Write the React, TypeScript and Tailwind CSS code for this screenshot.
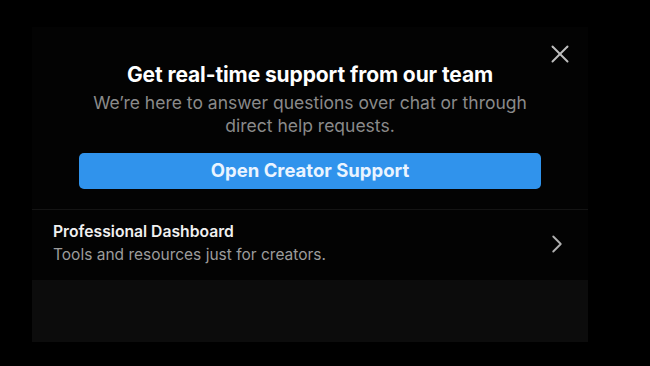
import React from "react";
import {X, ChevronRight} from "lucide-react";

export default function App() {
    return (
        <div className="w-[650px] h-[366px] bg-black pt-[27px] pl-[32px]" style={{fontFamily: "Inter, 'Noto Sans', sans-serif"}}>
            <div className="w-[556px] flex flex-col bg-[#030303]">
                <div className="relative h-[182px] flex flex-col items-center pt-[36px]">
                    <button className="absolute right-[13px] top-[12px] text-[#bdbdbd]">
                        <X size={30} strokeWidth={1.6} />
                    </button>
                    <h2 className="text-[21px] leading-[24px] font-bold text-white tracking-[-0.1px]">
                        Get real-time support from our team
                    </h2>
                    <p className="mt-[4px] text-[17.5px] leading-[23px] text-[#8a8a8a] text-center w-[455px]">
                        We’re here to answer questions over chat or through direct help requests.
                    </p>
                    <button className="mt-[16px] w-[462px] h-[36px] rounded-[5px] bg-[#3093ec] text-[#eaf4ff] text-[18.5px] font-bold">
                        Open Creator Support
                    </button>
                </div>
                <div className="h-px bg-[#141414]" />
                <div className="h-[70px] flex items-center justify-between pl-[21px] pr-[16px]">
                    <div className="flex flex-col -mt-[5px]">
                        <span className="text-[15.7px] leading-[23px] font-semibold text-[#f0f0f0]">Professional Dashboard</span>
                        <span className="text-[15.5px] leading-[23px] text-[#9c9c9c]">Tools and resources just for creators.</span>
                    </div>
                    <ChevronRight size={30} strokeWidth={1.5} className="text-[#b0b0b0] -mt-[2px]" />
                </div>
                <div className="h-[62px] bg-[#0c0c0c]" />
            </div>
        </div>
    );
}
